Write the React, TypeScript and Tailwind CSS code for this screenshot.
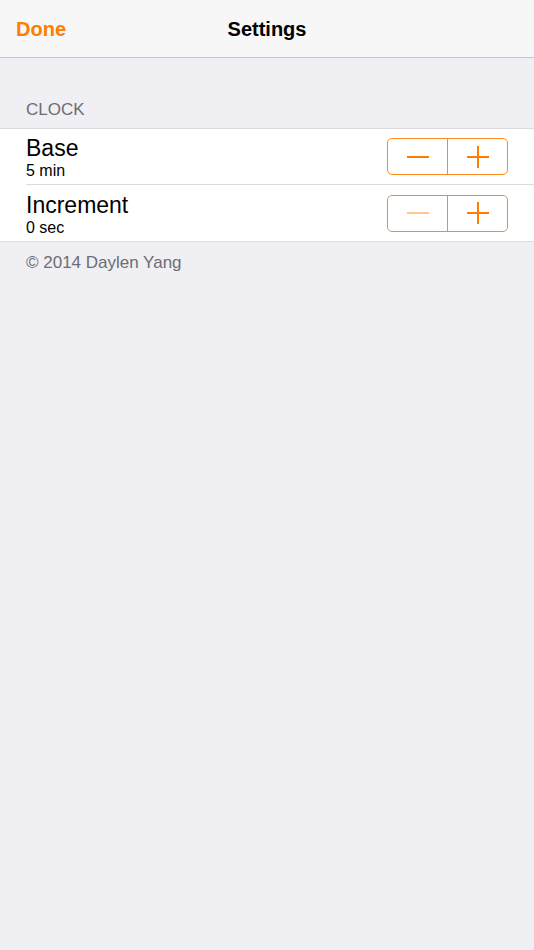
interface StepperRowProps {
  title: string;
  value: string;
  canDecrement: boolean;
  last?: boolean;
}

function MinusGlyph({ className }: { className: string }) {
  return (
    <svg width="22" height="22" viewBox="0 0 22 22" className={className}>
      <line x1="0" y1="11" x2="22" y2="11" stroke="currentColor" strokeWidth="2" />
    </svg>
  );
}

function PlusGlyph({ className }: { className: string }) {
  return (
    <svg width="22" height="22" viewBox="0 0 22 22" className={className}>
      <line x1="0" y1="11" x2="22" y2="11" stroke="currentColor" strokeWidth="2" />
      <line x1="11" y1="0" x2="11" y2="22" stroke="currentColor" strokeWidth="2" />
    </svg>
  );
}

function Stepper({ canDecrement }: { canDecrement: boolean }) {
  return (
    <div className="flex h-[37px] w-[121px] rounded-[5px] border-[1.5px] border-[#ff8a1f]">
      <button className="flex flex-1 items-center justify-center border-r-[1.5px] border-[#ff8a1f]">
        <MinusGlyph className={canDecrement ? "text-[#ff7d00]" : "text-[#ffc592]"} />
      </button>
      <button className="flex flex-1 items-center justify-center">
        <PlusGlyph className="text-[#ff7d00]" />
      </button>
    </div>
  );
}

function StepperRow({ title, value, canDecrement, last }: StepperRowProps) {
  return (
    <div className="pl-[26px]">
      <div
        className={`flex h-[56px] items-center pr-[26px] ${
          last ? "" : "border-b border-[#dcdce0]"
        }`}
      >
        <div className="flex flex-1 flex-col pt-[2px]">
          <span className="text-[23px] leading-[26px] text-black">{title}</span>
          <span className="text-[16px] leading-[19px] text-black">{value}</span>
        </div>
        <Stepper canDecrement={canDecrement} />
      </div>
    </div>
  );
}

export default function App() {
  return (
    <div
      className="flex min-h-[950px] flex-col bg-[#efeff4]"
      style={{ fontFamily: '"Liberation Sans", Arial, sans-serif' }}
    >
      <header className="relative flex h-[58px] items-center justify-center border-b border-[#c8c7cc] bg-[#f7f7f7]">
        <button className="absolute left-[16px] text-[20px] font-bold text-[#ff7d00]">
          Done
        </button>
        <h1 className="text-[20px] font-bold text-black">Settings</h1>
      </header>

      <div className="pl-[26px] pt-[41px] pb-[8px] text-[17px] leading-[21px] text-[#6d6d72]">
        CLOCK
      </div>

      <div className="border-y border-[#dcdce0] bg-white">
        <StepperRow title="Base" value="5 min" canDecrement />
        <StepperRow title="Increment" value="0 sec" canDecrement={false} last />
      </div>

      <div className="pl-[26px] pt-[10px] text-[17px] leading-[21px] text-[#6d6d72]">
        © 2014 Daylen Yang
      </div>
    </div>
  );
}
